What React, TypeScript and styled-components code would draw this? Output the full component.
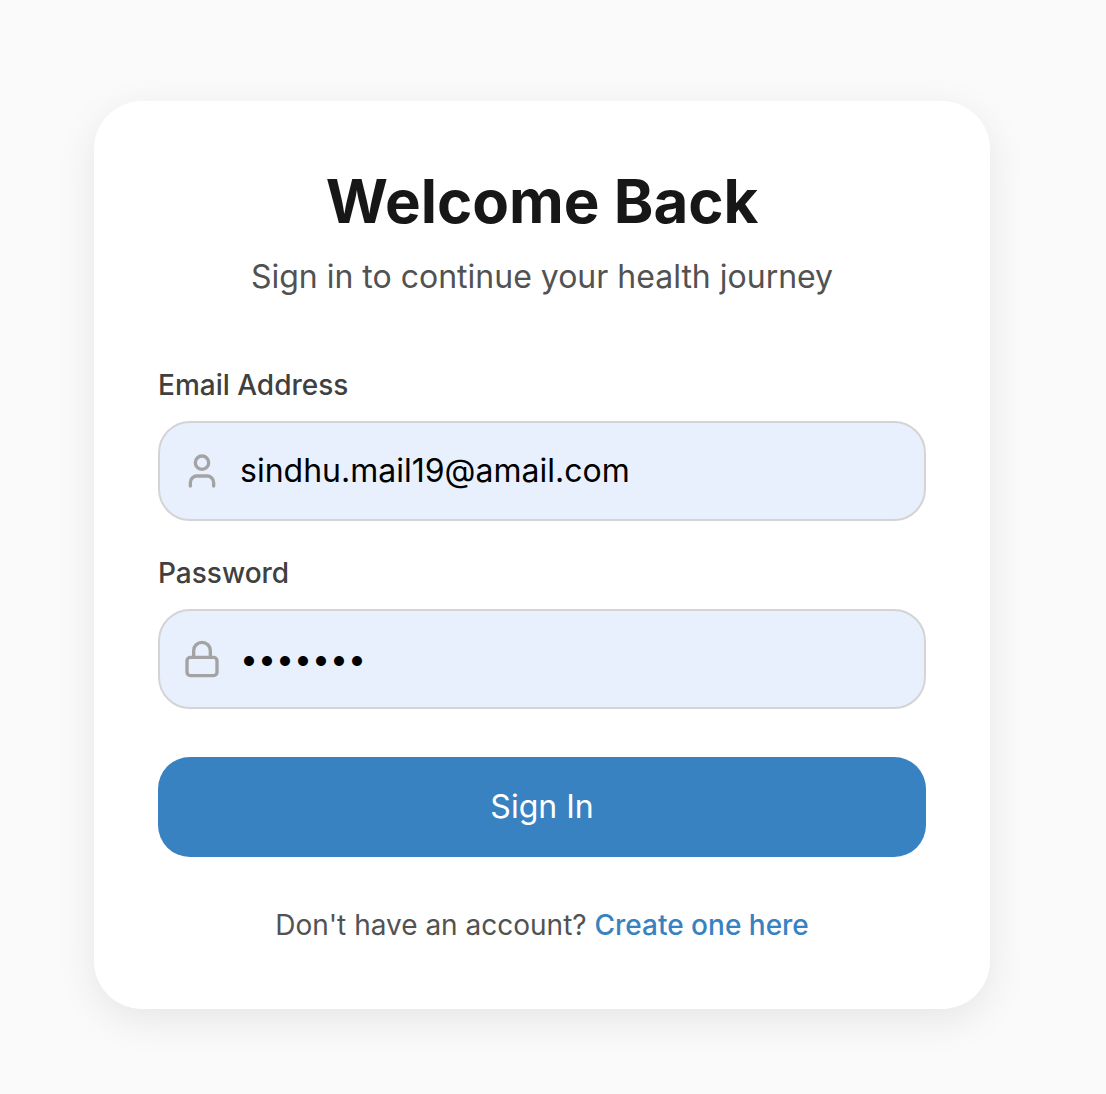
import React, { useState } from "react";
import styled, { createGlobalStyle } from "styled-components";

const GlobalStyle = createGlobalStyle`
  *, *::before, *::after { box-sizing: border-box; }
  body {
    margin: 0;
    background: #fafafa;
    font-family: Inter, "Liberation Sans", sans-serif;
    -webkit-font-smoothing: antialiased;
  }
`;

const Page = styled.main`
  min-height: 1094px;
  padding: 101px 116px 85px 94px;
`;

const Card = styled.section`
  width: 896px;
  height: 908px;
  padding: 64px;
  background: #ffffff;
  border-radius: 48px;
  box-shadow: 0 11px 40px rgba(0, 0, 0, 0.082);
`;

const Header = styled.header`
  margin-bottom: 60px;
  text-align: center;
`;

const Title = styled.h1`
  margin: 0 0 12px;
  color: #171717;
  font-size: 60px;
  font-weight: 700;
  line-height: 72px;
`;

const Subtitle = styled.p`
  margin: 0;
  color: #525252;
  font-size: 32px;
  line-height: 56px;
`;

const Form = styled.form`
  display: flex;
  flex-direction: column;
`;

const Field = styled.div`
  display: flex;
  flex-direction: column;
  gap: 16px;
  margin-bottom: 32px;
`;

const Label = styled.label`
  color: #404040;
  font-size: 28px;
  font-weight: 500;
  line-height: 40px;
`;

const InputBox = styled.div`
  display: flex;
  align-items: center;
  gap: 18px;
  height: 100px;
  padding: 0 22px;
  background: #e8f0fe;
  border: 2px solid #d4d4d4;
  border-radius: 32px;
`;

const Icon = styled.svg`
  flex: none;
  width: 40px;
  height: 40px;
  fill: none;
  stroke: #a3a3a3;
  stroke-width: 2;
  stroke-linecap: round;
  stroke-linejoin: round;
`;

const Input = styled.input`
  flex: 1;
  min-width: 0;
  padding: 0;
  border: 0;
  outline: 0;
  background: transparent;
  color: #000000;
  font: 400 32px/48px Inter, "Liberation Sans", sans-serif;
`;

const Submit = styled.button`
  height: 100px;
  margin-top: 16px;
  border: 0;
  border-radius: 32px;
  background: #3882c2;
  color: #ffffff;
  font: 400 32px/48px Inter, "Liberation Sans", sans-serif;
`;

const Footer = styled.p`
  margin: 48px 0 0;
  color: #525252;
  font-size: 28px;
  line-height: 40px;
  text-align: center;
`;

const Link = styled.a`
  color: #3882c2;
  font-weight: 500;
  text-decoration: none;
`;

export default function App() {
  const [email, setEmail] = useState("sindhu.mail19@amail.com");
  const [password, setPassword] = useState("account");

  return (
    <>
      <GlobalStyle />
      <Page>
        <Card>
          <Header>
            <Title>Welcome Back</Title>
            <Subtitle>Sign in to continue your health journey</Subtitle>
          </Header>
          <Form onSubmit={(e) => e.preventDefault()}>
            <Field>
              <Label htmlFor="email">Email Address</Label>
              <InputBox>
                <Icon viewBox="0 0 24 24">
                  <path d="M19 21v-2a4 4 0 0 0-4-4H9a4 4 0 0 0-4 4v2" />
                  <circle cx="12" cy="7" r="4" />
                </Icon>
                <Input id="email" value={email} onChange={(e) => setEmail(e.target.value)} />
              </InputBox>
            </Field>
            <Field>
              <Label htmlFor="password">Password</Label>
              <InputBox>
                <Icon viewBox="0 0 24 24">
                  <rect x="3" y="11" width="18" height="11" rx="2" />
                  <path d="M7 11V7a5 5 0 0 1 10 0v4" />
                </Icon>
                <Input
                  id="password"
                  type="password"
                  value={password}
                  onChange={(e) => setPassword(e.target.value)}
                />
              </InputBox>
            </Field>
            <Submit type="submit">Sign In</Submit>
          </Form>
          <Footer>
            Don't have an account? <Link href="#">Create one here</Link>
          </Footer>
        </Card>
      </Page>
    </>
  );
}
